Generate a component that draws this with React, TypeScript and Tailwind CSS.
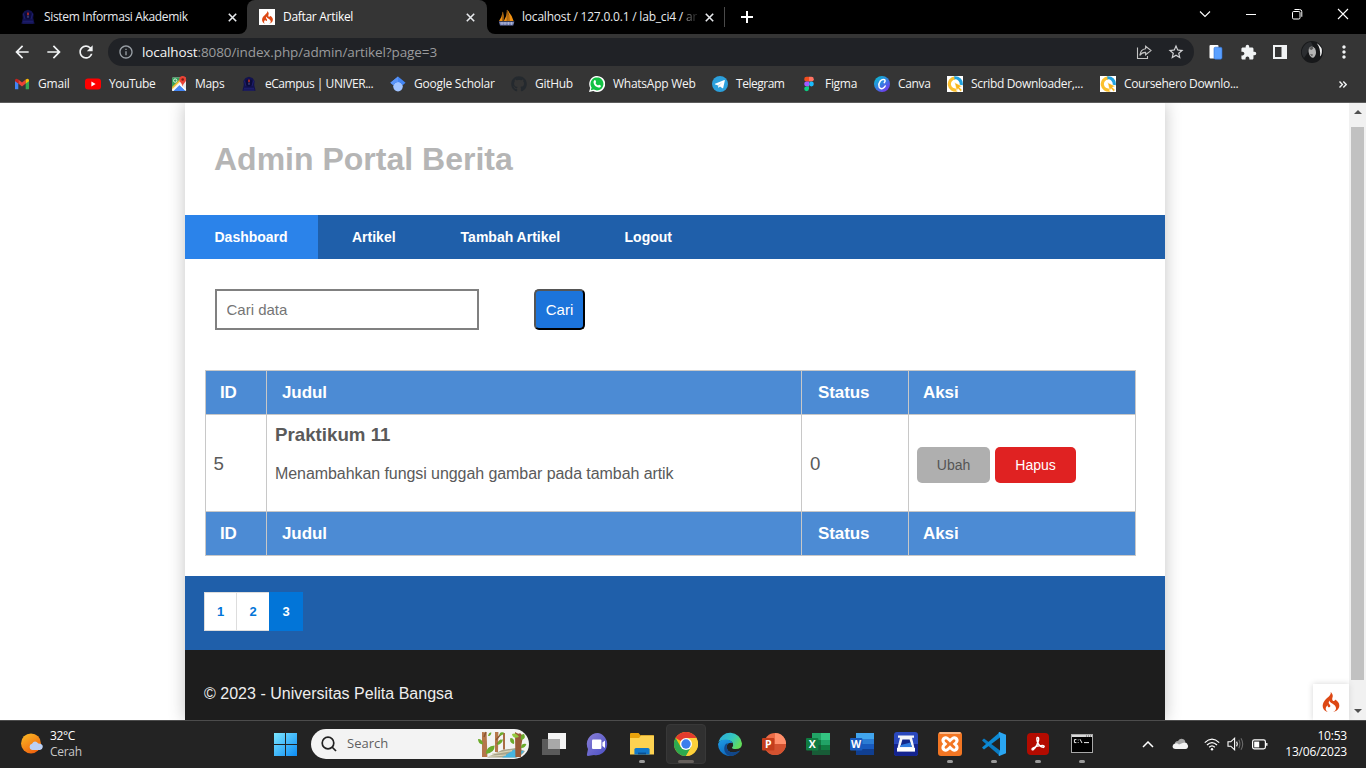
import React from "react";
import {
  MdArrowBack,
  MdArrowForward,
  MdRefresh,
  MdInfoOutline,
  MdStarBorder,
  MdExtension,
  MdMoreVert,
} from "react-icons/md";
import { FaGithub } from "react-icons/fa";
import { SiCodeigniter } from "react-icons/si";

const Cross = ({ className = "" }: { className?: string }) => (
  <svg width="9" height="9" viewBox="0 0 9 9" className={className}>
    <path d="M0.8 0.8L8.2 8.2M8.2 0.8L0.8 8.2" stroke="#e8eaed" strokeWidth="1.6" />
  </svg>
);

const CampusCrest = () => (
  <svg width="16" height="16" viewBox="0 0 16 16">
    <path d="M8 .8L11.5 2L13.6 5L13.2 9L14.6 14.8H1.4L2.8 9L2.4 5L4.5 2Z" fill="#12124f" />
    <path d="M4.5 5Q8 1.5 11.5 5V9Q8 12 4.5 9Z" fill="#0b0b3c" />
    <path d="M3 12.3H13M2.6 14H13.4M3.4 4.5L5 10M12.6 4.5L11 10" stroke="#23237a" strokeWidth=".8" />
    <path d="M8 2.8Q9.4 5 8.6 6.2H7.4Q6.6 5 8 2.8Z" fill="#d03222" />
    <path d="M7.5 6.8H8.5L8.3 9H7.7Z" fill="#6a70a8" />
  </svg>
);

const SailBoat = () => (
  <svg width="17" height="17" viewBox="0 0 17 17">
    <path d="M1 12Q4 8 4.8 2.5Q6.4 7 5.4 12Z" fill="#f29111" />
    <path d="M5.8 12Q9 7 9.2 .8Q14 6 15.6 12Z" fill="#f29111" />
    <path d="M9.2 1Q11.6 7 11 12M4.8 3L4.6 12M9.2 1V12" stroke="#7a4a12" strokeWidth=".8" fill="none" />
    <path d="M.8 12.6H16.4L15.2 16.4H2Z" fill="#6c78af" />
    <path d="M2 14H15.4M4 13V16M7 13V16M10.4 13V16M13.4 13V16" stroke="#c3c7dd" strokeWidth=".7" />
  </svg>
);

const Gmail = () => (
  <svg width="16" height="16" viewBox="0 0 16 16">
    <path d="M1 13V4.2L4.3 6.7V13.2H1.8Q1 13.2 1 13Z" fill="#4285f4" />
    <path d="M15 13V4.2L11.7 6.7V13.2H14.2Q15 13.2 15 13Z" fill="#34a853" />
    <path d="M4.3 3.6L8 6.5L11.7 3.6V7.6L8 10.5L4.3 7.6Z" fill="#ea4335" />
    <path d="M1 4.4Q1 2.8 2.4 2.7Q3 2.7 4.3 3.6V7.6L1 5.2Z" fill="#c5221f" />
    <path d="M15 4.4Q15 2.8 13.6 2.7Q13 2.7 11.7 3.6V7.6L15 5.2Z" fill="#fbbc04" />
  </svg>
);

const YouTube = () => (
  <svg width="16" height="16" viewBox="0 0 16 16">
    <rect x="0" y="2.4" width="16" height="11.2" rx="3" fill="#f00" />
    <path d="M6.4 5.6L10.6 8L6.4 10.4Z" fill="#fff" />
  </svg>
);

const Maps = () => (
  <svg width="16" height="16" viewBox="0 0 16 16">
    <rect x="1" y="1.5" width="14" height="13.5" rx="1.2" fill="#e8eaed" />
    <path d="M1 2.6Q1 1.5 2.2 1.5H12L1 12.4Z" fill="#34a05a" />
    <path d="M2 15L8.2 8.4L14.8 15Z" fill="#4285f4" />
    <path d="M1 12.6L12 1.8L13.6 4.2L2.4 15Q1 15 1 13.8Z" fill="#f5f5f5" />
    <path d="M1.2 10.8L9.6 2.6L10.8 4L1 13.4Z" fill="#fbc02d" opacity=".9" />
    <path d="M8.6 8.2L14.9 14.4" stroke="#fff" strokeWidth="1.3" />
    <circle cx="4.2" cy="4.6" r="1.7" fill="none" stroke="#e8f5e9" strokeWidth=".9" />
    <path d="M11.6 0Q15.2 .2 15.2 3.4Q15.2 5 13.4 7Q12 8.4 11.7 10.4Q11.4 8.4 10 7Q8.2 5 8.2 3.4Q8.4 .2 11.6 0Z" fill="#ea4335" />
    <circle cx="11.7" cy="3.5" r="1.3" fill="#7b1d13" />
  </svg>
);

const Scholar = () => (
  <svg width="16" height="16" viewBox="0 0 16 16">
    <circle cx="8" cy="10.6" r="4.8" fill="#a0c3ff" />
    <path d="M8 .6L15.6 6.8L12.6 9.2Q10.6 6 8 6T3.4 9.2L.4 6.8Z" fill="#4285f4" />
    <path d="M8 .6L8 6Q5 6 3.4 9.2L.4 6.8Z" fill="#5b94f6" />
  </svg>
);

const WhatsApp = () => (
  <svg width="16" height="16" viewBox="0 0 16 16">
    <path d="M0 16L1.2 11.9A8 8 0 1 1 4.3 15Z" fill="#fff" />
    <path d="M1.8 14.3L2.6 11.6A6.5 6.5 0 1 1 4.8 13.6Z" fill="#12c143" />
    <path d="M5.3 4.3Q6.2 3.6 6.6 4.6L7.1 5.9Q7.2 6.3 6.4 7.1Q7.2 8.8 9 9.6Q9.8 8.6 10.2 8.7L11.7 9.5Q12.1 9.8 11.7 10.7Q10.9 11.9 9.2 11.5Q5.4 10.5 4.6 7Q4.2 5.2 5.3 4.3Z" fill="#fff" />
  </svg>
);

const Telegram = () => (
  <svg width="16" height="16" viewBox="0 0 16 16">
    <circle cx="8" cy="8" r="8" fill="#2ca0dc" />
    <path d="M3 7.8L12.4 4.1Q12.9 4 12.8 4.7L11.2 11.9Q11 12.5 10.4 12.2L8 10.4L6.8 11.6Q6.4 11.9 6.3 11.4L5.7 9.3L3.1 8.4Q2.5 8.1 3 7.8Z" fill="#fff" />
    <path d="M6 9.2L10.7 6L7.2 9.6L6.7 11.2Z" fill="#b8d8ea" />
  </svg>
);

const Figma = () => (
  <svg width="16" height="16" viewBox="0 0 16 16">
    <path d="M8 .8H5.6A2.4 2.4 0 0 0 5.6 5.6H8Z" fill="#f24e1e" />
    <path d="M8 .8H10.4A2.4 2.4 0 0 1 10.4 5.6H8Z" fill="#ff7262" />
    <path d="M8 5.6H5.6A2.4 2.4 0 0 0 5.6 10.4H8Z" fill="#a259ff" />
    <circle cx="10.4" cy="8" r="2.4" fill="#1abcfe" />
    <path d="M8 10.4H5.6A2.4 2.4 0 1 0 8 12.8Z" fill="#0acf83" />
  </svg>
);

const Canva = () => (
  <svg width="16" height="16" viewBox="0 0 16 16">
    <defs>
      <linearGradient id="canva" x1="0" y1="0" x2=".8" y2="1">
        <stop offset="0" stopColor="#04c5cf" />
        <stop offset=".5" stopColor="#2f86e0" />
        <stop offset="1" stopColor="#7a2ff0" />
      </linearGradient>
    </defs>
    <circle cx="8" cy="8" r="8" fill="url(#canva)" />
    <path d="M10.3 6.6Q11.8 4.8 10.4 3.7Q8.4 2.7 6.3 5Q4.1 8 5.1 10.8Q6.5 13.6 9.2 12.2Q10.5 11.4 11.2 10" fill="none" stroke="#fff" strokeWidth="1.5" strokeLinecap="round" />
  </svg>
);

const Downloader = () => (
  <svg width="16" height="16" viewBox="0 0 16 16">
    <rect width="16" height="16" fill="#fff" />
    <path d="M8 1.8A6.2 6.2 0 1 0 10 14" fill="none" stroke="#fbc02d" strokeWidth="3.2" />
    <path d="M7.4 1.8A6.2 6.2 0 0 1 14.2 9" fill="none" stroke="#1fa2e0" strokeWidth="3.2" />
    <path d="M7.6 6.6L15.2 10.2L12.4 11.2L15.2 14L13.6 15.4L11 12.6L9.8 15Z" fill="#f9b61a" stroke="#fff" strokeWidth=".5" />
  </svg>
);

const bookmarks = [
  { label: "Gmail", icon: <Gmail />, w: "w-[71px]", t: "tracking-[-0.2px]" },
  { label: "YouTube", icon: <YouTube />, w: "w-[86px]", t: "tracking-[-0.45px]" },
  { label: "Maps", icon: <Maps />, w: "w-[70px]", t: "tracking-[-0.3px]" },
  { label: "eCampus | UNIVER...", icon: <CampusCrest />, w: "w-[149px]", t: "tracking-[-0.47px]" },
  { label: "Google Scholar", icon: <Scholar />, w: "w-[121px]", t: "tracking-[-0.25px]" },
  { label: "GitHub", icon: <FaGithub size={16} color="#24292e" />, w: "w-[78px]", t: "tracking-[-0.3px]" },
  { label: "WhatsApp Web", icon: <WhatsApp />, w: "w-[123px]", t: "tracking-[-0.26px]" },
  { label: "Telegram", icon: <Telegram />, w: "w-[89px]", t: "tracking-[-0.48px]" },
  { label: "Figma", icon: <Figma />, w: "w-[73px]", t: "tracking-[-0.3px]" },
  { label: "Canva", icon: <Canva />, w: "w-[73px]", t: "tracking-[-0.35px]" },
  { label: "Scribd Downloader,...", icon: <Downloader />, w: "w-[153px]", t: "tracking-[-0.34px]" },
  { label: "Coursehero Downlo...", icon: <Downloader />, w: "w-[239px]", t: "tracking-[-0.34px]" },
];

function TabStrip() {
  return (
    <div className="flex h-[34px] w-full bg-black text-[12px] text-[#e8eaed]">
      <div className="flex w-[239px] items-center pl-5">
        <CampusCrest />
        <span className="ml-2 w-[184px] tracking-[-0.34px]">Sistem Informasi Akademik</span>
        <Cross />
      </div>
      <div className="flex h-full w-[8px] items-end bg-[#353535]">
        <div className="h-full w-full rounded-br-lg bg-black" />
      </div>
      <div className="h-full w-[240px] bg-black">
        <div className="flex h-full w-full items-center rounded-t-lg bg-[#353535] pl-[12px] text-white">
          <span className="flex size-4 items-center justify-center bg-white">
            <SiCodeigniter size={13} color="#dd4814" />
          </span>
          <span className="ml-2 w-[183px] tracking-[-0.3px]">Daftar Artikel</span>
          <Cross />
        </div>
      </div>
      <div className="h-full w-[8px] bg-[#353535]">
        <div className="h-full w-full rounded-bl-lg bg-black" />
      </div>
      <div className="flex items-center pl-[3px]">
        <SailBoat />
        <span className="ml-[7px] w-[175px] overflow-hidden whitespace-nowrap tracking-[-0.2px]">
          localhost / 127.0.0.1 / lab_ci4 / <span className="bg-linear-to-r from-[#999] to-[#222] bg-clip-text text-transparent">ar</span>
        </span>
        <Cross className="ml-[8px]" />
        <div className="ml-[10px] h-5 w-px bg-[#4a4a4a]" />
        <svg width="12" height="12" viewBox="0 0 12 12" className="ml-4">
          <path d="M6 0V12M0 6H12" stroke="#fff" strokeWidth="2" />
        </svg>
      </div>
      <div className="ml-auto flex h-[28px] items-center gap-[34px] pr-[17px]">
        <svg width="12" height="12" viewBox="0 0 12 12">
          <path d="M1 3.5L6 8.5L11 3.5" fill="none" stroke="#fff" strokeWidth="1.1" />
        </svg>
        <svg width="12" height="12" viewBox="0 0 12 12">
          <path d="M1 6.5H11" stroke="#fff" />
        </svg>
        <svg width="12" height="12" viewBox="0 0 12 12" fill="none" stroke="#fff">
          <rect x="1.5" y="3.5" width="7.5" height="7.5" rx="1.2" />
          <path d="M3.5 1.5H8.6Q10.8 1.5 10.8 3.6V8.8" />
        </svg>
        <svg width="12" height="12" viewBox="0 0 12 12">
          <path d="M1 1L11 11M11 1L1 11" stroke="#fff" strokeWidth="1.1" />
        </svg>
      </div>
    </div>
  );
}

function Toolbar() {
  return (
    <div className="flex h-[36px] items-center bg-[#353535] pl-[12px]">
      <div className="flex w-[96px] gap-3 text-[#f1f3f4]">
        <MdArrowBack size={20} />
        <MdArrowForward size={20} />
        <MdRefresh size={20} />
      </div>
      <div className="flex h-7 w-[1086px] items-center rounded-full bg-[#202226] pl-[10px] pr-[9px]">
        <MdInfoOutline size={16} color="#9aa0a6" />
        <span className="ml-2 text-[13.5px] tracking-[-0.11px] text-[#9a9b9d]">
          <span className="text-[#f5f5f5]">localhost</span>:8080/index.php/admin/artikel?page=3
        </span>
        <svg width="16" height="16" viewBox="0 0 16 16" className="ml-auto" fill="none" stroke="#c4c4c4" strokeWidth="1.1">
          <path d="M1.5 3.5V14.5H11.5V12" />
          <path d="M9.6 2.2L15 6.6L9.6 10.8V8.4Q6 8.2 3.8 11.4Q4.6 5.4 9.6 4.8Z" />
        </svg>
        <MdStarBorder size={18} color="#d2d3d5" className="ml-[15px]" />
      </div>
      <svg width="16" height="16" viewBox="0 0 16 16" className="ml-[14px]">
        <rect x="1.5" y="1" width="9" height="13.5" rx="1" fill="#fff" />
        <rect x="6" y="3.2" width="8" height="12" rx="1.4" fill="#5aa0ff" stroke="#2f6fd0" strokeWidth=".6" />
      </svg>
      <MdExtension size={17} color="#f1f3f4" className="ml-4" />
      <svg width="14" height="14" viewBox="0 0 14 14" className="ml-4">
        <rect x="1" y="1" width="12" height="12" fill="none" stroke="#f1f3f4" strokeWidth="2" />
        <rect x="8.5" y="1" width="5" height="12" fill="#f1f3f4" />
      </svg>
      <svg width="22" height="22" viewBox="0 0 22 22" className="ml-[14px]">
        <circle cx="11" cy="11" r="11" fill="#17181a" />
        <path d="M1 9Q4 1 10 1L12 5Q7 5 6.4 12L3 17Q0 13 1 9Z" fill="#2b2d30" />
        <path d="M8 7Q11 4 14 7.4Q16 11.4 14 15Q12 18.4 9.6 15.6Q6.4 11.6 8 7Z" fill="#b4b4b4" />
        <path d="M8 8L10.6 9L12.4 7.4L11.4 5.4Q9 5.4 8 8ZM9 13L12 13.6L11 15.6Z" fill="#5c5c5c" />
        <path d="M15.8 2.2Q22 6 20.8 12Q20.2 15 19 15.6Q20 7.4 15.8 2.2Z" fill="#f0f0f0" />
      </svg>
      <MdMoreVert size={20} color="#f1f3f4" className="ml-[11px]" />
    </div>
  );
}

function Bookmarks() {
  return (
    <div className="flex h-[32px] items-center bg-[#353535] pb-1 pl-[14px] text-[12px] text-[#f4f4f4]">
      {bookmarks.map((b) => (
        <div key={b.label} className={`flex shrink-0 items-center gap-2 whitespace-nowrap ${b.w} ${b.t}`}>
          {b.icon}
          <span>{b.label}</span>
        </div>
      ))}
      <svg width="8" height="7" viewBox="0 0 8 7" fill="none" stroke="#f1f3f4" strokeWidth="1.4">
        <path d="M.5 .5L3.4 3.5L.5 6.5M4.3 .5L7.2 3.5L4.3 6.5" />
      </svg>
    </div>
  );
}

function HeadRow() {
  return (
    <tr className="h-[44px] bg-[#4c8bd4] text-left text-[17px] font-bold tracking-[-0.1px] text-white">
      <th className="border border-[#c8c8c8] py-0 pl-[14px] pr-0">ID</th>
      <th className="border border-[#c8c8c8] py-0 pl-[15px] pr-0">Judul</th>
      <th className="border border-[#c8c8c8] py-0 pl-[16px] pr-0">Status</th>
      <th className="border border-[#c8c8c8] py-0 pl-[14px] pr-0">Aksi</th>
    </tr>
  );
}

function Page() {
  return (
    <div className="relative flex h-[617px] overflow-hidden bg-white font-['Liberation_Sans',Arial,sans-serif] text-[#5a5a5a]">
      <div className="flex w-[1349px] pl-[185px]">
        <div className="flex w-[980px] flex-col bg-white shadow-[0_0_16px_#c4c4c4]">
          <header className="flex h-[112px] items-center pl-[29px]">
            <h1 className="text-[32px] leading-[40px] font-bold text-[#b5b5b5]">Admin Portal Berita</h1>
          </header>
          <nav className="flex h-[44px] bg-[#1f5faa] text-[14px] font-bold text-white">
            <a className="flex w-[133px] items-center bg-[#2b83ea] pl-[29.5px]">Dashboard</a>
            <a className="ml-[4px] flex items-center px-[30px]">Artikel</a>
            <a className="ml-[5px] flex items-center px-[30px]">Tambah Artikel</a>
            <a className="ml-[4.4px] flex items-center px-[30px]">Logout</a>
          </nav>
          <form className="mt-[30px] ml-[30px] flex">
            <input
              placeholder="Cari data"
              className="h-[41px] w-[264px] border-2 border-[#808080] px-[9.5px] text-[15px] placeholder:text-[#757575]"
            />
            <button
              type="button"
              className="ml-[55px] h-[41px] w-[51px] rounded-[5px] border-2 border-t-[#555] border-r-black border-b-black border-l-[#555] bg-[#1c74db] pt-[2px] text-[15px] text-white"
            >
              Cari
            </button>
          </form>
          <table className="mt-[40px] ml-[20px] w-[931px] table-fixed border-collapse">
            <colgroup>
              <col className="w-[61px]" />
              <col className="w-[535px]" />
              <col className="w-[107px]" />
              <col className="w-[227px]" />
            </colgroup>
            <thead>
              <HeadRow />
            </thead>
            <tbody>
              <tr className="h-[97px] text-[18.7px]">
                <td className="border border-[#c8c8c8] pt-[2px] pl-[7.5px]">5</td>
                <td className="border border-[#c8c8c8] pt-[8px] pl-[8px] align-top">
                  <h3 className="text-[18.72px] leading-6 font-bold">Praktikum 11</h3>
                  <p className="mt-[15px] text-[16px] leading-6 tracking-[-0.07px]">
                    Menambahkan fungsi unggah gambar pada tambah artik
                  </p>
                </td>
                <td className="border border-[#c8c8c8] pt-[2px] pl-2">0</td>
                <td className="border border-[#c8c8c8] pl-2">
                  <div className="mt-[3px] flex gap-[5px] text-[14px]">
                    <a className="flex h-9 w-[73px] items-center justify-center rounded-[5px] bg-[#afafaf] pt-[2px] text-[#555]">Ubah</a>
                    <a className="flex h-9 w-[81px] items-center justify-center rounded-[5px] bg-[#e02222] pt-[2px] text-white">Hapus</a>
                  </div>
                </td>
              </tr>
            </tbody>
            <tfoot>
              <HeadRow />
            </tfoot>
          </table>
          <div className="mt-[20px] h-[74px] shrink-0 bg-[#1f5faa] pt-4 pl-[19px]">
            <div className="flex h-[39px] w-[99px] text-center text-[13px] leading-[37px] font-bold text-[#0275d8]">
              <span className="w-[33px] border border-[#ddd] bg-white">1</span>
              <span className="w-[32px] border-y border-[#ddd] bg-white">2</span>
              <span className="w-[34px] border border-[#0275d8] bg-[#0275d8] text-white">3</span>
            </div>
          </div>
          <footer className="flex-1 bg-[#1d1d1d] pt-[32px] pl-[19px] text-[16px] leading-6 tracking-[0.02px] text-[#eee]">
            © 2023 - Universitas Pelita Bangsa
          </footer>
        </div>
      </div>
      <div className="flex w-[17px] flex-col items-center bg-[#f1f1f1] pt-[7px]">
        <svg width="8" height="4" viewBox="0 0 8 4">
          <path d="M0 4L4 0L8 4Z" fill="#505050" />
        </svg>
        <div className="mt-[13px] h-[553px] w-[13px] bg-[#c1c1c1]" />
        <svg width="8" height="4" viewBox="0 0 8 4" className="mt-[29px]">
          <path d="M0 0L4 4L8 0Z" fill="#505050" />
        </svg>
      </div>
      <div className="absolute right-[17px] bottom-0 flex h-[36px] w-[36px] items-center justify-center bg-white shadow-[0_0_6px_#d5d5d5]">
        <SiCodeigniter size={20} color="#dd4814" />
      </div>
    </div>
  );
}

const TaskView = () => (
  <svg width="24" height="22" viewBox="0 0 24 22">
    <rect x="6" y="0" width="18" height="16" fill="#f4f4f4" />
    <rect x="0" y="6" width="18" height="16" fill="#5a5a5a" />
    <rect x="6" y="6" width="12" height="10" fill="#a8a8a8" />
  </svg>
);
const Chat = () => (
  <svg width="24" height="24" viewBox="0 0 24 24">
    <defs>
      <linearGradient id="chat" x1="0" y1="0" x2="1" y2="1">
        <stop offset="0" stopColor="#8a7fd6" />
        <stop offset="1" stopColor="#4a4fc4" />
      </linearGradient>
    </defs>
    <path d="M12 1A11 11 0 1 1 8 23L2 24Q.6 24 1 22L2 17A11 11 0 0 1 12 1Z" fill="url(#chat)" />
    <rect x="6" y="7.6" width="9.4" height="9.4" rx="1" fill="#fff" />
    <path d="M16.4 10.6L19 8.6V16L16.4 14Z" fill="#fff" />
  </svg>
);
const Explorer = () => (
  <svg width="24" height="24" viewBox="0 0 24 24">
    <path d="M0 2Q0 1 1 1H8.6L10.4 3.2H23Q24 3.2 24 4V8H0Z" fill="#e8a20c" />
    <path d="M0 6H9L11 3.6H24V22.4H0Z" fill="#fdd251" />
    <path d="M4.4 22.4V17.6Q4.4 16 6 16H18Q19.6 16 19.6 17.6V22.4Z" fill="#1178ca" />
    <path d="M8 22.4V20.6H16V22.4Z" fill="#0a4f91" />
  </svg>
);
const Chrome = () => (
  <svg width="24" height="24" viewBox="0 0 24 24">
    <circle cx="12" cy="12" r="12" fill="#fbc116" />
    <path d="M12 12L1.6 6A12 12 0 0 1 22.4 6Z" fill="#e33b2e" />
    <path d="M1.6 6A12 12 0 0 0 12 24L17.2 15L12 12L6.8 15Z" fill="#2da94f" />
    <path d="M12 6H22.4A12 12 0 0 1 12 24L17.2 15Z" fill="#fdd03a" />
    <circle cx="12" cy="12" r="6" fill="#fff" />
    <circle cx="12" cy="12" r="4.7" fill="#3b7ded" />
  </svg>
);
const Edge = () => (
  <svg width="24" height="24" viewBox="0 0 24 24">
    <defs>
      <linearGradient id="edgeTop" x1="0" y1="0" x2="1" y2=".5">
        <stop offset="0" stopColor="#2aa8e0" />
        <stop offset=".6" stopColor="#34c6bf" />
        <stop offset="1" stopColor="#62dd5c" />
      </linearGradient>
      <linearGradient id="edgeLow" x1="0" y1="0" x2=".6" y2="1">
        <stop offset="0" stopColor="#1f9de6" />
        <stop offset="1" stopColor="#0b63b8" />
      </linearGradient>
    </defs>
    <path d="M.4 10A12 12 0 0 1 24 11.4Q24 17 17.6 17Q14 17 14 15.4Q15.6 14 15 11.6Q13.6 8 8.4 8Q3 8 .4 10Z" fill="url(#edgeTop)" />
    <path d="M0 12Q1.6 7.6 8 7.6Q13 7.8 14.6 11Q10 10 8.8 14Q8.4 20.6 15.6 20.4Q19.4 20.2 22 18.6A12 12 0 0 1 0 12Z" fill="url(#edgeLow)" />
    <path d="M8.8 14Q8.4 20.6 15.6 20.4Q19.4 20.2 22 18.6Q18 24.6 11 23.8Q5.4 21 6.4 15Q7 11.6 10 11Q9 12 8.8 14Z" fill="#12478a" />
  </svg>
);

function OfficeIcon({ kind }: { kind: "P" | "X" | "W" }) {
  const plate = kind === "P" ? "#c43e1c" : kind === "X" ? "#107c41" : "#185abd";
  return (
    <svg width="24" height="24" viewBox="0 0 24 24">
      {kind === "P" && (
        <>
          <circle cx="13" cy="12" r="11" fill="#ed6c47" />
          <path d="M13 1A11 11 0 0 1 24 12H13Z" fill="#ff8f6b" />
          <path d="M2 12H24A11 11 0 0 1 2 12Z" fill="#d35230" />
        </>
      )}
      {kind === "X" && (
        <>
          <rect x="6" y="1" width="9" height="7" fill="#21a366" />
          <rect x="15" y="1" width="9" height="7" fill="#33c481" />
          <rect x="6" y="8" width="9" height="5" fill="#107c41" />
          <rect x="15" y="8" width="9" height="5" fill="#21a366" />
          <rect x="6" y="13" width="18" height="10" fill="#185c37" />
          <rect x="15" y="13" width="9" height="5" fill="#107c41" />
        </>
      )}
      {kind === "W" && (
        <>
          <rect x="6" y="1" width="18" height="6" fill="#41a5ee" />
          <rect x="6" y="7" width="18" height="5" fill="#2b7cd3" />
          <rect x="6" y="12" width="18" height="5" fill="#185abd" />
          <rect x="6" y="17" width="18" height="6" fill="#103f91" />
        </>
      )}
      <rect x="0" y="6" width="12.4" height="12.4" rx="1" fill={plate} />
      <text x="6.2" y="16" textAnchor="middle" fontSize="10.5" fontWeight="bold" fill="#fff" fontFamily="Open Sans, sans-serif">
        {kind}
      </text>
    </svg>
  );
}

const Scanner = () => (
  <svg width="24" height="24" viewBox="0 0 24 24">
    <rect width="24" height="24" rx="3" fill="#2a48bd" />
    <path d="M0 12H24V21Q24 24 21 24H3Q0 24 0 21Z" fill="#14248f" />
    <path d="M4 3.4H20V5.8H18L20.6 16.6H3.4L6 5.8H4Z" fill="#f4f6fb" />
    <path d="M8.4 7.4H15.6L17.8 15H6.2Z" fill="#12288c" />
    <path d="M7 13L16.6 10.6L17.8 15H6.2Z" fill="#2f7be0" />
    <rect x="3" y="16" width="18" height="3.6" fill="#fff" />
  </svg>
);
const Xampp = () => (
  <svg width="24" height="24" viewBox="0 0 24 24">
    <rect width="24" height="24" rx="3" fill="#f37623" />
    <rect x="1.5" y="0" width="21" height="2" fill="#f9b98a" />
    <path d="M7.6 8.4L16.4 15.6M16.4 8.4L7.6 15.6" stroke="#fff" strokeWidth="8.4" strokeLinecap="round" />
    <path d="M8 8.7L10.4 11V13L8 15.3M16 8.7L13.6 11V13L16 15.3M10 12H14" fill="none" stroke="#f37623" strokeWidth="2.8" strokeLinecap="round" strokeLinejoin="round" />
  </svg>
);
const VsCode = () => (
  <svg width="24" height="24" viewBox="0 0 24 24">
    <path d="M0 8.2L2 6.4L18 18.4V24L1.4 9.8Z" fill="#0a7bc2" />
    <path d="M0 15.8L2 17.6L18 5.6V0L1.4 14.2Z" fill="#0d8ad4" />
    <path d="M17.4 0L24 2.8V21.2L17.4 24L16.6 23.4L18 18V6L16.6 .6Z" fill="#2aa6f2" />
  </svg>
);
const Acrobat = () => (
  <svg width="22" height="22" viewBox="0 0 22 22">
    <rect width="22" height="22" rx="4" fill="#b30b00" />
    <path d="M10.4 4.4Q12 4 11.6 7Q10.6 12.4 6.4 16.6Q4.6 17.4 5.2 15.6Q8 13 15.6 12.4Q18.4 13 16.4 14.4Q12 13.6 10.2 8.4Q9.4 5 10.4 4.4Z" fill="none" stroke="#fff" strokeWidth="1.4" />
  </svg>
);
const Terminal = () => (
  <svg width="22" height="20" viewBox="0 0 22 20">
    <rect x=".5" y=".5" width="21" height="18" fill="#000" stroke="#a8a8a8" />
    <rect x="1" y="1" width="20" height="2" fill="#d8d8d8" />
    <path d="M15 2H20" stroke="#555" strokeDasharray="1 1" />
    <path d="M5.4 5.6H3.4V8.6H5.4M7.2 5.6V6.4M7.2 8V8.8M9 5.2L11 9M13 8.6H18" stroke="#eee" fill="none" />
  </svg>
);

const Windows = () => (
  <svg width="23" height="23" viewBox="0 0 23 23">
    <defs>
      <linearGradient id="win" x1="0" y1="0" x2="1" y2="1">
        <stop offset="0" stopColor="#7be6ff" />
        <stop offset="1" stopColor="#0c8cf5" />
      </linearGradient>
    </defs>
    <path d="M0 0H11V11H0ZM12 0H23V11H12ZM0 12H11V23H0ZM12 12H23V23H12Z" fill="url(#win)" />
  </svg>
);

const Forest = () => (
  <svg width="49" height="27" viewBox="0 0 49 27">
    <path d="M9 26.4L24 19L38 17L47 20Q44 25 38 26.4Z" fill="#a9a58c" />
    <path d="M24 26.4L36 18.6L46 20Q43 25 38 26.4Z" fill="#46b4e0" />
    <path d="M14 23L34 19.6M11 25.4L28 24" stroke="#d8d3b6" strokeWidth="1.2" />
    <path d="M4 1L8.6 1.4L9.4 26H4Z" fill="#b5764a" />
    <path d="M17 1H20.4L20 21H17Z" fill="#b5764a" />
    <path d="M25 2H27V18.6H25Z" fill="#a96d44" />
    <path d="M37 1Q41 4 42 2L45 5L43.6 13L43 26H37.4Z" fill="#9a5b38" />
    <path d="M18 9L23 3M19 13L23 9M6 6L8 1" stroke="#8b5431" strokeWidth="1.4" />
    <path d="M8 23Q8 15 16.6 14.4Q17 22 8 23ZM0 8Q5 8 5 13.6Q0 13 0 8ZM10 5Q11 1 13.4 1.6Q13 5.6 10 5ZM19 14Q20 8 25 8.4Q24 13 19 14ZM36 13Q31 12 32.4 7Q37 7 36 13ZM43 9Q42 3 46 3Q48.6 8 43 9ZM43 17Q43 12 48.4 13Q47 17.4 43 17ZM21.4 4.6Q21.4 0 26 1.6Q25 5 21.4 4.6Z" fill="#6bab2b" />
    <path d="M34 3Q38 1 41 6Q35 8.6 34 3Z" fill="#94c93d" />
  </svg>
);

const apps: { id: string; icon: React.ReactNode; mark?: "dot" | "bar" }[] = [
  { id: "tasks", icon: <TaskView /> },
  { id: "chat", icon: <Chat /> },
  { id: "files", icon: <Explorer />, mark: "dot" },
  { id: "chrome", icon: <Chrome />, mark: "bar" },
  { id: "edge", icon: <Edge /> },
  { id: "ppt", icon: <OfficeIcon kind="P" /> },
  { id: "xls", icon: <OfficeIcon kind="X" /> },
  { id: "doc", icon: <OfficeIcon kind="W" /> },
  { id: "scan", icon: <Scanner /> },
  { id: "xampp", icon: <Xampp />, mark: "dot" },
  { id: "code", icon: <VsCode />, mark: "dot" },
  { id: "pdf", icon: <Acrobat />, mark: "dot" },
  { id: "term", icon: <Terminal />, mark: "dot" },
];

function Taskbar() {
  return (
    <div className="flex h-12 items-center border-t border-[#4c4c4c] bg-[#232323] pb-px text-[12px] text-white">
      <div className="flex w-[274px] items-center gap-[7px] pl-5">
        <svg width="23" height="22" viewBox="0 0 23 22">
          <defs>
            <linearGradient id="sun" x1="0" y1="0" x2=".6" y2="1">
              <stop offset="0" stopColor="#fbbd25" />
              <stop offset="1" stopColor="#f0650f" />
            </linearGradient>
          </defs>
          <circle cx="11" cy="10.4" r="10" fill="url(#sun)" />
          <path d="M12 17A3.2 3.2 0 0 1 12 10.8Q14.6 6.6 18.4 10.4Q23 10.4 22.8 14Q22.4 16.8 20 17Z" fill="#bcd0f4" />
        </svg>
        <div className="leading-4">
          <div className="tracking-[-0.4px]">32°C</div>
          <div className="tracking-[-0.3px] text-[#c8c8c8]">Cerah</div>
        </div>
      </div>
      <Windows />
      <div className="ml-[14px] flex h-[30px] w-[218px] items-center rounded-full bg-[#f3f3f3] pl-[10px]">
        <svg width="16" height="16" viewBox="0 0 16 16" fill="none" stroke="#222" strokeWidth="1.7">
          <circle cx="7" cy="7" r="5.8" />
          <path d="M11 11L15 15" />
        </svg>
        <span className="ml-[10px] w-[131px] text-[13px] text-[#5f5f5f]">Search</span>
        <Forest />
      </div>
      <div className="ml-[3px] flex">
        {apps.map((a) => (
          <div key={a.id} className="flex w-11 justify-center">
            <div
              className={
                a.mark === "bar"
                  ? "relative flex size-10 items-center justify-center rounded border border-[#383838] bg-[#303030]"
                  : "relative flex size-10 items-center justify-center"
              }
            >
              {a.icon}
              {a.mark === "dot" && <span className="absolute bottom-[1px] h-[3px] w-[6px] rounded-full bg-[#9a9a9a]" />}
              {a.mark === "bar" && <span className="absolute bottom-0 h-[3px] w-4 rounded-full bg-[#66605c]" />}
            </div>
          </div>
        ))}
      </div>
      <svg width="12" height="7" viewBox="0 0 12 7" className="ml-[38px]" fill="none" stroke="#fff" strokeWidth="1.5">
        <path d="M1 6L6 1L11 6" />
      </svg>
      <svg width="17" height="12" viewBox="0 0 17 12" className="ml-[18px]">
        <path d="M2.6 7Q2.6 3 6 3Q8.4 -.6 12 1.6Q13 2.4 13.4 4.2L8 9Z" fill="#a5a5a5" />
        <path d="M3.6 11Q.4 10.8 .6 8Q1 5.8 3.4 5.4Q5.4 5 7 6.4L10.6 5Q13.4 3.6 15 5.4Q17 8 15.6 10Q14.8 11 13.4 11Z" fill="#f2f2f2" />
      </svg>
      <svg width="16" height="13" viewBox="0 0 16 13" className="ml-[15px]" fill="none" stroke="#fff" strokeWidth="1.3">
        <path d="M.8 4.6Q8 -2.4 15.2 4.6M3 7Q8 2.2 13 7M5.2 9.2Q8 6.6 10.8 9.2" />
        <circle cx="8" cy="11.2" r="1.2" fill="#fff" stroke="none" />
      </svg>
      <svg width="17" height="14" viewBox="0 0 17 14" className="ml-[7px]" fill="none" stroke="#fff" strokeWidth="1.1">
        <path d="M1 4.8H3.8L7.6 1.2V12.8L3.8 9.2H1Z" />
        <path d="M9.6 4.6Q11 7 9.6 9.4" />
        <path d="M11.8 2.8Q14 7 11.8 11.2M14 1.2Q17.4 7 14 12.8" stroke="#6a6a6a" />
      </svg>
      <svg width="16" height="11" viewBox="0 0 16 11" className="ml-[8px]">
        <rect x=".6" y=".9" width="12.8" height="9" rx="1.8" fill="none" stroke="#fff" strokeWidth="1.2" />
        <rect x="2.2" y="2.6" width="5" height="5.8" fill="#fff" />
        <path d="M14.8 4V6.8" stroke="#fff" strokeWidth="1.3" />
      </svg>
      <div className="mr-[19px] ml-auto text-right leading-4 tracking-[-0.2px]">
        <div>10:53</div>
        <div>13/06/2023</div>
      </div>
    </div>
  );
}

export default function App() {
  return (
    <div className="flex h-[768px] w-[1366px] flex-col overflow-hidden bg-white font-['Open_Sans','Noto_Sans',sans-serif]">
      <TabStrip />
      <Toolbar />
      <Bookmarks />
      <div className="-mt-[2px] h-[3px] shrink-0 border-b border-[#5c5c5c] bg-[#353535]" />
      <Page />
      <Taskbar />
    </div>
  );
}
